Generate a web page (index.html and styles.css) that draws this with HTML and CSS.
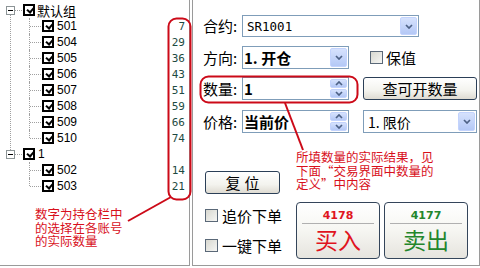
FILE: index.html
```html
<!DOCTYPE html>
<html lang="zh-CN">
<head>
<meta charset="UTF-8">
<title>下单</title>
<link rel="stylesheet" href="styles.css">
</head>
<body>
<div class="screen">
  <div class="accounts">
    <ul class="tree">
      <li class="group">
        <div class="row"><span class="exp"></span><span class="cb"></span><span class="name cn">默认组</span></div>
        <ul class="kids">
          <li class="row"><span class="cb"></span><span class="name">501</span><span class="qty">7</span></li>
          <li class="row"><span class="cb"></span><span class="name">504</span><span class="qty">29</span></li>
          <li class="row"><span class="cb"></span><span class="name">505</span><span class="qty">36</span></li>
          <li class="row"><span class="cb"></span><span class="name">506</span><span class="qty">43</span></li>
          <li class="row"><span class="cb"></span><span class="name">507</span><span class="qty">51</span></li>
          <li class="row"><span class="cb"></span><span class="name">508</span><span class="qty">59</span></li>
          <li class="row"><span class="cb"></span><span class="name">509</span><span class="qty">66</span></li>
          <li class="row"><span class="cb"></span><span class="name">510</span><span class="qty">74</span></li>
        </ul>
      </li>
      <li class="group">
        <div class="row"><span class="exp"></span><span class="cb"></span><span class="name">1</span></div>
        <ul class="kids">
          <li class="row"><span class="cb"></span><span class="name">502</span><span class="qty">14</span></li>
          <li class="row"><span class="cb"></span><span class="name">503</span><span class="qty">21</span></li>
        </ul>
      </li>
    </ul>
    <p class="note left-note"><span>数字为持仓栏中</span><span>的选择在各账号</span><span>的实际数量</span></p>
  </div>

  <div class="order">
    <div class="field f1">
      <span class="lbl">合约:</span>
      <div class="combo contract">
        <span class="val mono">SR1001</span>
        <span class="drop"><svg width="8" height="5" viewBox="0 0 8 5"><polyline points="1,1 4,4 7,1" /></svg></span>
      </div>
    </div>
    <div class="field f2">
      <span class="lbl">方向:</span>
      <div class="combo short">
        <span class="val bold">1. 开仓</span>
        <span class="drop"><svg width="8" height="5" viewBox="0 0 8 5"><polyline points="1,1 4,4 7,1" /></svg></span>
      </div>
      <span class="check hedge"><span class="box"></span>保值</span>
    </div>
    <div class="field f3">
      <span class="lbl">数量:</span>
      <div class="combo short">
        <span class="val bold">1</span>
        <span class="spinner">
          <span class="arr"><svg width="8" height="5" viewBox="0 0 8 5"><polyline points="1,4 4,1 7,4" /></svg></span>
          <span class="arr"><svg width="8" height="5" viewBox="0 0 8 5"><polyline points="1,1 4,4 7,1" /></svg></span>
        </span>
      </div>
      <button class="btn query">查可开数量</button>
    </div>
    <div class="field f4">
      <span class="lbl">价格:</span>
      <div class="combo short">
        <span class="val bold">当前价</span>
        <span class="spinner">
          <span class="arr"><svg width="8" height="5" viewBox="0 0 8 5"><polyline points="1,4 4,1 7,4" /></svg></span>
          <span class="arr"><svg width="8" height="5" viewBox="0 0 8 5"><polyline points="1,1 4,4 7,1" /></svg></span>
        </span>
      </div>
      <div class="combo kind">
        <span class="val">1. 限价</span>
        <span class="drop"><svg width="8" height="5" viewBox="0 0 8 5"><polyline points="1,1 4,4 7,1" /></svg></span>
      </div>
    </div>

    <button class="btn reset">复位</button>

    <div class="bottom">
      <div class="opts">
        <span class="check"><span class="box"></span>追价下单</span>
        <span class="check"><span class="box"></span>一键下单</span>
      </div>
      <button class="trade buy"><span class="price">4178</span><span class="act">买入</span></button>
      <button class="trade sell"><span class="price">4177</span><span class="act">卖出</span></button>
    </div>
  </div>

  <p class="note right-note"><span>所填数量的实际结果，见</span><span>下面“交易界面中数量的</span><span>定义”中内容</span></p>

  <svg class="marks" width="480" height="268" viewBox="0 0 480 268">
    <rect x="168.5" y="18.5" width="22" height="181" rx="8" />
    <line x1="171" y1="197" x2="128" y2="221" />
    <rect x="200.5" y="76.5" width="157" height="26" rx="8" />
    <line x1="285" y1="103" x2="303" y2="150" />
  </svg>
</div>
</body>
</html>
```

FILE: styles.css
```css
body {
    margin: 0;
    background: #fff;
    font-family: "Noto Sans CJK SC", sans-serif;
    color: #000;
}

.screen {
    position: relative;
    width: 480px;
    height: 268px;
    display: flex;
    gap: 2px;
}

/* account tree */
.accounts {
    width: 189px;
    height: 265px;
    border-right: 1px solid #9a9a9a;
    border-bottom: 1px solid #9a9a9a;
}

.tree,
.kids {
    list-style: none;
    margin: 0;
    padding: 0;
}

.tree {
    padding-top: 2px;
}

.group {
    position: relative;
}

.group:not(:last-child)::after {
    content: "";
    position: absolute;
    left: 10px;
    top: 13px;
    bottom: -4px;
    border-left: 1px dotted #a0a0a0;
}

.row {
    position: relative;
    display: flex;
    align-items: center;
    height: 16px;
}

.group > .row {
    padding-left: 23px;
}

.group > .row::before {
    content: "";
    position: absolute;
    left: 15px;
    top: 8px;
    width: 7px;
    border-top: 1px dotted #a0a0a0;
}

.exp {
    position: absolute;
    left: 6px;
    top: 4px;
    width: 9px;
    height: 9px;
    box-sizing: border-box;
    border: 1px solid #8c9496;
    background: #fff;
}

.exp::before {
    content: "";
    position: absolute;
    left: 1px;
    top: 3px;
    width: 5px;
    height: 1px;
    background: #000;
}

.kids .row {
    padding-left: 42px;
}

.kids .row::before {
    content: "";
    position: absolute;
    left: 29px;
    top: 0;
    height: 100%;
    border-left: 1px dotted #a0a0a0;
}

.kids .row:last-child::before {
    height: 8px;
}

.kids .row::after {
    content: "";
    position: absolute;
    left: 30px;
    top: 8px;
    width: 11px;
    border-top: 1px dotted #a0a0a0;
}

.cb {
    position: relative;
    flex: none;
    width: 12px;
    height: 12px;
    box-sizing: border-box;
    border: 2px solid #000;
    background: #fff;
}

.cb::after {
    content: "";
    position: absolute;
    left: 2.5px;
    top: 0px;
    width: 3px;
    height: 5px;
    border-right: 2px solid #000;
    border-bottom: 2px solid #000;
    transform: rotate(40deg);
}

.name {
    margin-left: 3px;
    font-family: "Liberation Sans", sans-serif;
    font-size: 12px;
}

.name.cn {
    margin-left: 2px;
    font-family: "Noto Sans CJK SC", sans-serif;
    font-size: 13px;
}

.qty {
    margin-left: auto;
    padding-right: 4px;
    font-family: "DejaVu Sans Mono", monospace;
    font-size: 11px;
    color: #1d4a42;
}

.note {
    margin: 0;
    color: #d8101c;
    font-size: 12.5px;
    display: flex;
    flex-direction: column;
}

.note span {
    height: 13.5px;
    line-height: 13.5px;
    white-space: nowrap;
}

.left-note {
    margin: 13px 0 0 35px;
}

.right-note {
    position: absolute;
    left: 296px;
    top: 150px;
}

/* order panel */
.order {
    width: 288px;
    height: 266px;
    box-sizing: border-box;
    border: 1px solid #9a9a9a;
    border-top: none;
    padding: 15px 0 0 10px;
    display: flex;
    flex-direction: column;
    align-items: flex-start;
}

.field {
    display: flex;
    align-items: center;
    height: 23px;
}

.f1 {
    height: 22px;
    margin-bottom: 9px;
}

.f2 {
    margin-bottom: 8px;
}

.f3 {
    margin-bottom: 10px;
}

.lbl {
    width: 39px;
    font-size: 15px;
    line-height: 20px;
}

.combo {
    position: relative;
    display: flex;
    align-items: center;
    height: 100%;
    box-sizing: border-box;
    border: 1px solid #7f9db9;
    background: #fff;
}

.contract {
    width: 177px;
}

.short {
    width: 107px;
}

.kind {
    width: 114px;
    margin-left: 14px;
}

.val {
    flex: 1;
    padding-left: 4px;
    font-size: 14px;
    white-space: nowrap;
}

.val.mono {
    font-family: "DejaVu Sans Mono", monospace;
    font-size: 12.5px;
}

.val.bold {
    padding-left: 1px;
    font-weight: bold;
    font-size: 15px;
}

.drop,
.arr {
    display: flex;
    align-items: center;
    justify-content: center;
    box-sizing: border-box;
    border: 1px solid #c3d3fd;
    border-radius: 2px;
    background: linear-gradient(#d6e2fd, #b4c8f6);
}

.drop {
    width: 17px;
    height: calc(100% - 2px);
    margin-right: 1px;
}

.spinner {
    display: flex;
    flex-direction: column;
    gap: 1px;
    width: 17px;
    height: calc(100% - 2px);
    margin-right: 1px;
}

.arr {
    flex: 1;
}

.drop polyline,
.arr polyline {
    fill: none;
    stroke: #4d6185;
    stroke-width: 1.7;
}

.check {
    display: flex;
    align-items: center;
    gap: 4px;
    font-size: 15px;
    line-height: 15px;
}

.hedge {
    margin-left: 21px;
    gap: 3px;
}

.box {
    width: 13px;
    height: 13px;
    box-sizing: border-box;
    border: 1px solid #5a6878;
    background: linear-gradient(135deg, #d8d8d0, #f6f6f4);
}

.btn {
    height: 23px;
    box-sizing: border-box;
    border: 1px solid #2b3f57;
    border-radius: 3px;
    background: linear-gradient(#ffffff, #f3f3ee 60%, #dedbd2);
    font-family: "Noto Sans CJK SC", sans-serif;
    font-size: 15px;
    line-height: 19px;
    padding: 0;
    color: #000;
}

.query {
    width: 114px;
    margin-left: 14px;
}

.reset {
    width: 75px;
    margin: 38px 0 0 2px;
    letter-spacing: 4px;
    text-indent: 4px;
}

.bottom {
    display: flex;
    margin-top: 8px;
}

.opts {
    width: 93px;
    display: flex;
    flex-direction: column;
    gap: 15px;
    padding: 6px 0 0 2px;
    box-sizing: border-box;
}

.trade {
    width: 84px;
    height: 57px;
    box-sizing: border-box;
    border: 1px solid #34455a;
    border-radius: 4px;
    background: linear-gradient(#ffffff, #f6f6f2 50%, #e6e4de);
    padding: 0;
    display: flex;
    flex-direction: column;
    align-items: stretch;
}

.sell {
    margin-left: 4px;
}

.price {
    margin: 0 5px;
    padding-top: 6px;
    height: 14px;
    border-bottom: 1px solid #b0b0b0;
    font-family: "DejaVu Sans", sans-serif;
    font-weight: bold;
    font-size: 11px;
    line-height: 14px;
    text-align: center;
}

.act {
    font-family: "Noto Sans CJK SC", sans-serif;
    font-size: 23px;
    line-height: 30px;
    text-align: center;
}

.buy .price,
.buy .act {
    color: #e0141e;
}

.sell .price,
.sell .act {
    color: #23862c;
}

.marks {
    position: absolute;
    left: 0;
    top: 0;
    pointer-events: none;
}

.marks rect,
.marks line {
    fill: none;
    stroke: #cc0a18;
    stroke-width: 2;
}
```
